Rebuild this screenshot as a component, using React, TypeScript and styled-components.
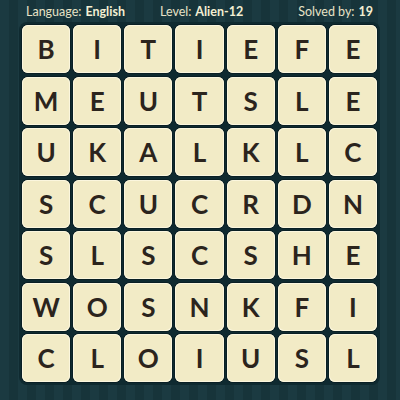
import styled, { createGlobalStyle } from "styled-components"

const GlobalStyle = createGlobalStyle`
    html, body {
        margin: 0;
        padding: 0;
    }
    body {
        font-family: "Lato", "Liberation Sans", sans-serif;
    }
`

const Page = styled.div`
    width: 400px;
    height: 400px;
    overflow: hidden;
    background: repeating-linear-gradient(
        90deg,
        #1b3a41 0px,
        #1b3a41 9px,
        #17343a 9px,
        #17343a 18px
    );
`

const Header = styled.div`
    height: 22px;
    display: flex;
    align-items: center;
    padding: 0 27px 0 26px;
    font-size: 12.5px;
    color: #e7e2c6;
`

const Stat = styled.div<{ $offset?: string }>`
    margin-left: ${(p) => p.$offset ?? "0"};
    white-space: nowrap;
`

const Value = styled.b`
    font-weight: 700;
    color: #f4efd3;
    margin-left: 4px;
`

const Board = styled.div`
    margin: 0 0 0 19px;
    width: 355px;
    height: 357px;
    padding: 3px;
    background: #0f2a30;
    border-radius: 8px;
    display: grid;
    grid-template-columns: repeat(7, 1fr);
    grid-template-rows: repeat(7, 1fr);
    column-gap: 3px;
    row-gap: 3.5px;
`

const Tile = styled.div`
    background: #f2ebc6;
    border-radius: 6px;
    box-shadow: inset 0 0 0 1px #fbf6de, 0 0 0 1px #0a1f24;
    display: flex;
    align-items: center;
    justify-content: center;
    font-family: "Lato", "Liberation Sans", sans-serif;
    font-weight: 700;
    font-size: 26px;
    color: #2b241d;
`

const rows = [
    "BITIEFE",
    "MEUTSLE",
    "UKALKLC",
    "SCUCRDN",
    "SLSCSHE",
    "WOSNKFI",
    "CLOIUSL",
]

export default function App() {
    return (
        <>
            <GlobalStyle />
            <Page>
                <Header>
                    <Stat>Language:<Value>English</Value></Stat>
                    <Stat $offset="35px">Level:<Value>Alien-12</Value></Stat>
                    <Stat $offset="auto">Solved by:<Value>19</Value></Stat>
                </Header>
                <Board>
                    {rows.map((row, r) =>
                        row.split("").map((ch, c) => <Tile key={`${r}-${c}`}>{ch}</Tile>)
                    )}
                </Board>
            </Page>
        </>
    )
}
